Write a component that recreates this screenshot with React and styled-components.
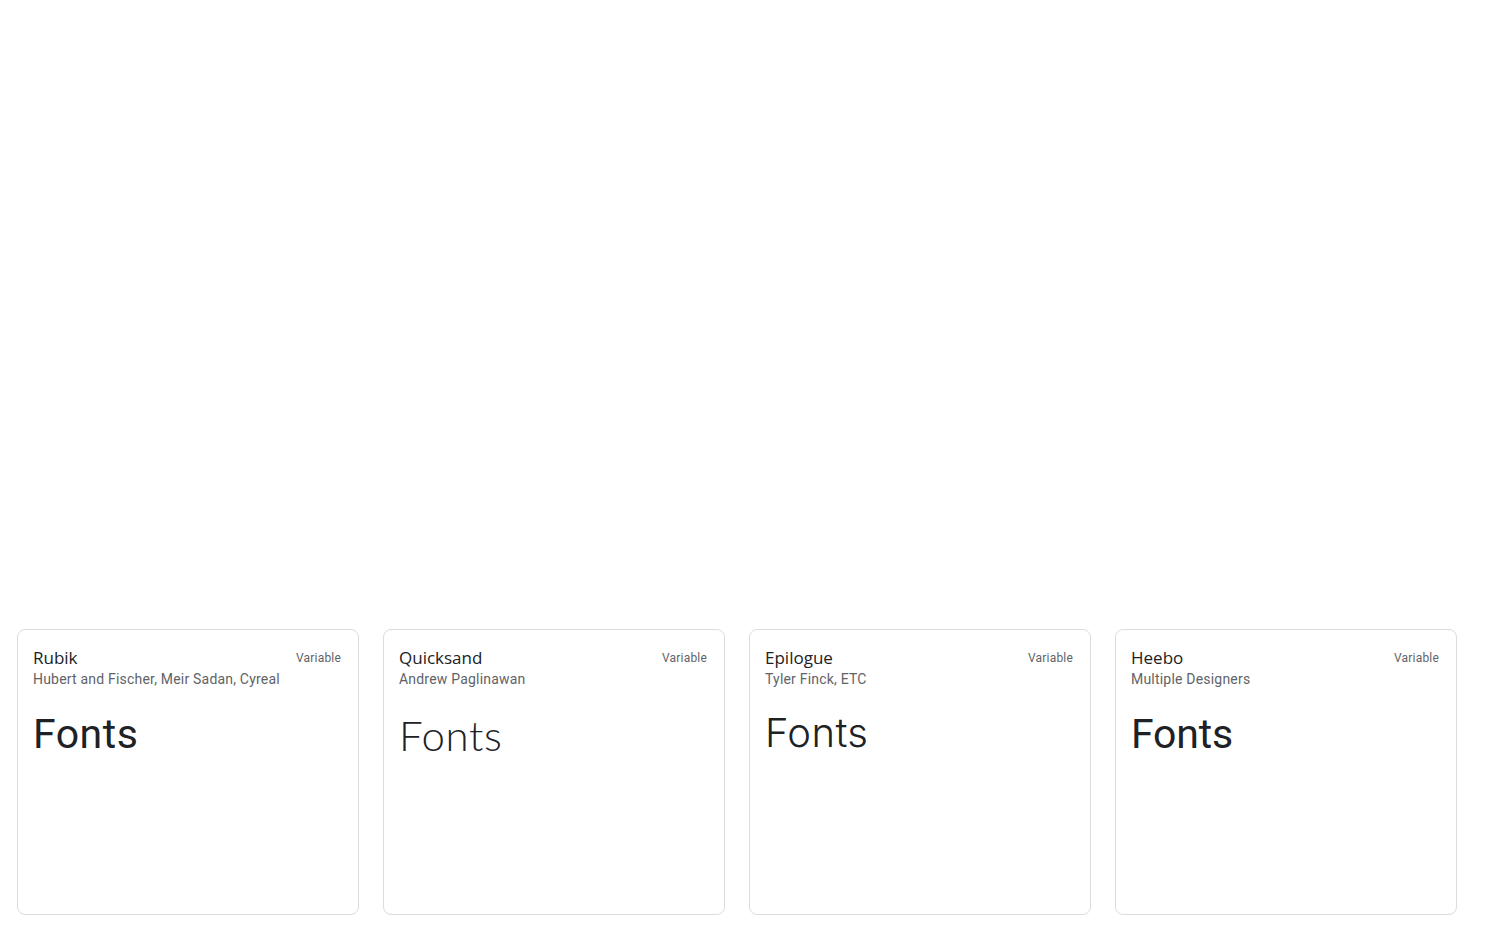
import React from "react";
import styled, { createGlobalStyle } from "styled-components";

const Global = createGlobalStyle`
  html, body { margin: 0; padding: 0; background: #fff; }
  body { font-family: Roboto, "Liberation Sans", sans-serif; }
`;

const Page = styled.div`
  width: 1507px;
  height: 937px;
  box-sizing: border-box;
  padding: 629px 0 0 17px;
  overflow: hidden;
`;

const Grid = styled.div`
  display: grid;
  grid-template-columns: repeat(4, 342px);
  column-gap: 24px;
`;

const Card = styled.div`
  box-sizing: border-box;
  height: 286px;
  border: 1px solid #dadce0;
  border-radius: 8px;
  padding: 16px 16px 16px 15px;
  display: flex;
  flex-direction: column;
`;

const Head = styled.div`
  display: flex;
  justify-content: space-between;
  align-items: flex-start;
`;

const Names = styled.div`
  display: flex;
  flex-direction: column;
`;

const Title = styled.div`
  font-family: "Open Sans", Roboto, sans-serif;
  font-size: 17px;
  line-height: 24px;
  color: #202124;
  margin-top: 0;
`;

const Author = styled.div`
  font-family: Roboto, sans-serif;
  font-size: 14px;
  line-height: 20px;
  color: #5f6368;
  letter-spacing: 0.2px;
  margin-top: -1px;
`;

const Tag = styled.div`
  font-family: Roboto, sans-serif;
  font-size: 12px;
  line-height: 16px;
  color: #5f6368;
  letter-spacing: 0.2px;
  margin-top: 4px;
  margin-right: 1px;
`;

const Sample = styled.div`
  font-family: ${(p) => p.$font};
  font-weight: ${(p) => p.$weight};
  font-size: ${(p) => p.$size}px;
  line-height: 48px;
  color: #202124;
  margin-top: ${(p) => p.$top}px;
  letter-spacing: ${(p) => p.$ls}px;
`;

const fonts = [
  { name: "Rubik", author: "Hubert and Fischer, Meir Sadan, Cyreal", font: "Roboto, sans-serif", weight: 400, size: 41, top: 21, ls: 0.5 },
  { name: "Quicksand", author: "Andrew Paglinawan", font: "Lato, sans-serif", weight: 300, size: 42, top: 22, ls: 0.6 },
  { name: "Epilogue", author: "Tyler Finck, ETC", font: "Inter, sans-serif", weight: 350, size: 40, top: 20, ls: 0.4 },
  { name: "Heebo", author: "Multiple Designers", font: "Roboto, sans-serif", weight: 400, size: 41, top: 21, ls: -0.2 },
];

export default function App() {
  return (
    <>
      <Global />
      <Page>
        <Grid>
          {fonts.map((f) => (
            <Card key={f.name}>
              <Head>
                <Names>
                  <Title>{f.name}</Title>
                  <Author>{f.author}</Author>
                </Names>
                <Tag>Variable</Tag>
              </Head>
              <Sample $font={f.font} $weight={f.weight} $size={f.size} $top={f.top} $ls={f.ls}>
                Fonts
              </Sample>
            </Card>
          ))}
        </Grid>
      </Page>
    </>
  );
}
